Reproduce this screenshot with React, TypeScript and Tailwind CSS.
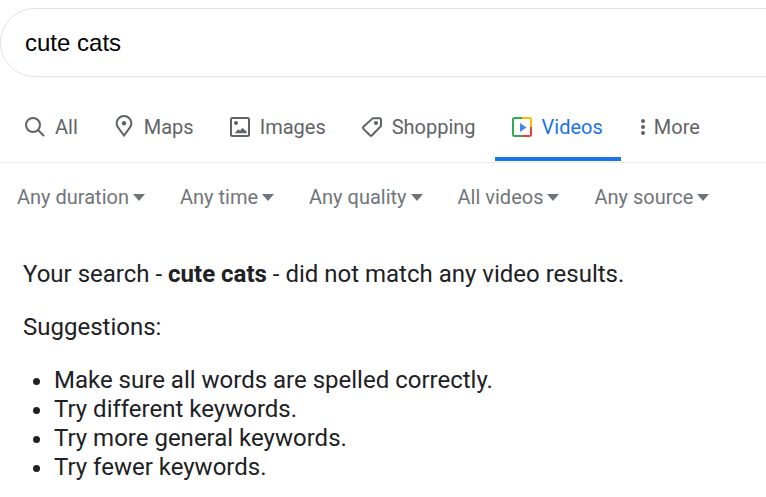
import React, { useState } from 'react';

type TabId = 'all' | 'maps' | 'images' | 'shopping' | 'videos';

interface Tab {
  id: TabId;
  label: string;
  icon: React.ReactNode;
}

const TABS: Tab[] = [
  {
    id: 'all',
    label: 'All',
    icon: (
      <svg viewBox="0 0 24 24" className="size-6" fill="none" stroke="currentColor" strokeWidth="2" aria-hidden="true">
        <circle cx="10" cy="10" r="7" />
        <path d="M15 15l6 6" />
      </svg>
    ),
  },
  {
    id: 'maps',
    label: 'Maps',
    icon: (
      <svg viewBox="0 0 24 24" className="size-6" fill="none" stroke="currentColor" strokeWidth="2" aria-hidden="true">
        <path d="M12 20.500L6.200 12.600C5.200 11.200 4.600 9.900 4.600 8.400a7.400 7.400 0 0 1 14.800 0c0 1.500-.6 2.800-1.600 4.200z" />
        <circle cx="12" cy="8.200" r="2.200" fill="currentColor" stroke="none" />
      </svg>
    ),
  },
  {
    id: 'images',
    label: 'Images',
    icon: (
      <svg viewBox="0 0 24 24" className="size-6" fill="none" stroke="currentColor" strokeWidth="2" aria-hidden="true">
        <rect x="3" y="3" width="18" height="18" rx="1.500" />
        <circle cx="8" cy="8" r="2" fill="currentColor" stroke="none" />
        <path d="M6.500 18.200l4-4 1.500 1.600 2.700-3 2.200 2.700.8-.5 1.300 3.200z" fill="currentColor" stroke="none" />
      </svg>
    ),
  },
  {
    id: 'shopping',
    label: 'Shopping',
    icon: (
      <svg viewBox="0 0 24 24" className="size-6" fill="none" stroke="currentColor" strokeWidth="2" aria-hidden="true">
        <path d="M13.400 3.200H19.500a1.500 1.500 0 0 1 1.500 1.500V10.500a1.500 1.500 0 0 1-.45 1.060l-8.500 8.700a1.500 1.500 0 0 1-2.120 0L3.400 13.900a1.500 1.500 0 0 1 0-2.120l8.940-8.140a1.500 1.500 0 0 1 1.060-.44z" />
        <circle cx="16" cy="8" r="2.100" fill="currentColor" stroke="none" />
      </svg>
    ),
  },
  {
    id: 'videos',
    label: 'Videos',
    icon: (
      <svg viewBox="0 0 24 24" className="size-6" fill="none" strokeWidth="2" aria-hidden="true">
        <path d="M12 3H4.500A1.500 1.500 0 0 0 3 4.500v15A1.500 1.500 0 0 0 4.500 21H12" stroke="#34a853" />
        <path d="M12 3h7.500A1.500 1.500 0 0 1 21 4.500V12" stroke="#fbbc04" />
        <path d="M21 12v7.500a1.500 1.500 0 0 1-1.500 1.500H12" stroke="#ea4335" />
        <path d="M10 8v9l6.500-4.500z" fill="#4285f4" />
      </svg>
    ),
  },
];

const FILTERS = [
  { name: 'Duration', options: ['Any duration', 'Short (0–4 min.)', 'Medium (4–20 min.)', 'Long (20+ min.)'] },
  { name: 'Time', options: ['Any time', 'Past hour', 'Past 24 hours', 'Past week'] },
  { name: 'Quality', options: ['Any quality', 'High quality'] },
  { name: 'Captions', options: ['All videos', 'Closed captioned'] },
  { name: 'Source', options: ['Any source', 'youtube.com', 'dailymotion.com'] },
];

const SUGGESTIONS = [
  'Make sure all words are spelled correctly.',
  'Try different keywords.',
  'Try more general keywords.',
  'Try fewer keywords.',
];

const FilterSelect: React.FC<{ name: string; options: string[] }> = ({ name, options }) => (
  <div className="grid items-center shrink-0">
    <select
      aria-label={name}
      className="col-start-1 row-start-1 appearance-none field-sizing-content bg-transparent pr-4 leading-6 outline-none cursor-pointer"
    >
      {options.map(option => (
        <option key={option}>{option}</option>
      ))}
    </select>
    <svg viewBox="0 0 12 7" className="col-start-1 row-start-1 justify-self-end w-3 h-[7px] pointer-events-none" fill="currentColor" aria-hidden="true">
      <path d="M0 0h12L6 7z" />
    </svg>
  </div>
);

const App: React.FC = () => {
  const [query, setQuery] = useState('cute cats');
  const [activeTab, setActiveTab] = useState<TabId>('videos');

  return (
    <div className="min-h-screen overflow-x-hidden bg-white pt-2 font-['Roboto',sans-serif] text-[#202124]">
      {/* The search box runs past the right edge of the page */}
      <form role="search" onSubmit={e => e.preventDefault()} className="-mr-10">
        <input
          type="text"
          aria-label="Search"
          value={query}
          onChange={e => setQuery(e.target.value)}
          className="block w-full h-[69px] rounded-full border border-[#dfe1e5] px-6 text-2xl text-black outline-none font-['Liberation_Sans',Arial,sans-serif]"
        />
      </form>

      <nav className="flex gap-px border-b border-[#ebebeb] pt-[38px] pb-px pl-2 text-xl leading-6 text-[#5f6368]">
        {TABS.map(tab => (
          <a
            key={tab.id}
            href={`#${tab.id}`}
            onClick={() => setActiveTab(tab.id)}
            aria-current={activeTab === tab.id ? 'page' : undefined}
            className={`flex shrink-0 items-center gap-2 border-b-4 pl-[15px] pr-[18px] pb-[18px] ${
              activeTab === tab.id ? 'border-[#1a73e8] text-[#1a73e8]' : 'border-transparent'
            }`}
          >
            {tab.icon}
            {tab.label}
          </a>
        ))}
        <button type="button" className="flex shrink-0 items-center gap-2 border-b-4 border-transparent pl-[18px] pb-[18px] cursor-pointer">
          <svg viewBox="0 0 6 24" className="w-[6px] h-6" fill="currentColor" aria-hidden="true">
            <circle cx="3" cy="6" r="2" />
            <circle cx="3" cy="12" r="2" />
            <circle cx="3" cy="18" r="2" />
          </svg>
          More
        </button>
      </nav>

      <div className="flex gap-[35px] pt-[22px] pl-[17px] text-xl text-[#70757a]">
        {FILTERS.map(filter => (
          <FilterSelect key={filter.name} {...filter} />
        ))}
      </div>

      <main className="px-[23px] pt-[51px] text-2xl leading-[29px]">
        <p>
          Your search - <strong className="font-bold">cute cats</strong> - did not match any video results.
        </p>
        <p className="mt-6">Suggestions:</p>
        <ul className="mt-6 list-disc pl-[31px]">
          {SUGGESTIONS.map(text => (
            <li key={text}>{text}</li>
          ))}
        </ul>
      </main>
    </div>
  );
};

export default App;
